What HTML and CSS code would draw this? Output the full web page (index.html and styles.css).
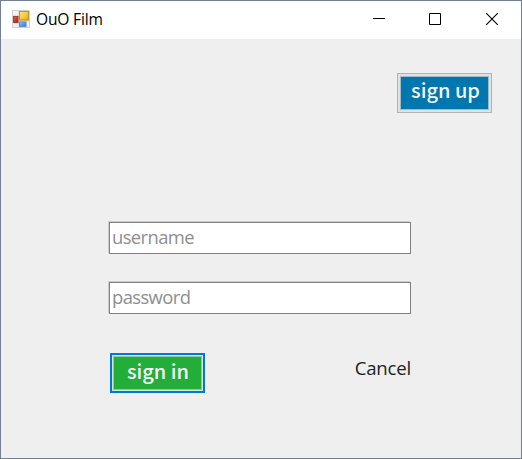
FILE: index.html
```html
<!DOCTYPE html>
<html lang="en">
<head>
<meta charset="utf-8">
<title>OuO Film</title>
<link rel="stylesheet" href="styles.css">
</head>
<body>
<div class="window">
  <header class="titlebar">
    <svg class="app-icon" width="18" height="18" viewBox="0 0 18 18">
      <defs>
        <linearGradient id="y" x1="0" y1="0" x2="1" y2="1"><stop offset="0" stop-color="#ffe98c"/><stop offset="1" stop-color="#eda900"/></linearGradient>
        <linearGradient id="b" x1="0" y1="0" x2="1" y2="1"><stop offset="0" stop-color="#8fc0ff"/><stop offset="1" stop-color="#2f72dc"/></linearGradient>
        <linearGradient id="r" x1="0" y1="0" x2="1" y2="1"><stop offset="0" stop-color="#e46a5c"/><stop offset="1" stop-color="#a5140c"/></linearGradient>
      </defs>
      <rect width="18" height="18" rx="1" fill="#cfcfcf"/>
      <rect x="1" y="1" width="5.5" height="4.5" fill="#f2f2f2"/>
      <rect x="1" y="13.500" width="5.500" height="3.500" fill="#f2f2f2"/>
      <rect x="14.500" y="11.500" width="2.500" height="5.500" fill="#f2f2f2"/>
      <rect x="7.500" y="1.500" width="9" height="8.500" fill="url(#y)" stroke="#c39128"/>
      <rect x="1.500" y="6.500" width="4.500" height="6" fill="url(#r)" stroke="#a83c36"/>
      <rect x="7.500" y="12" width="6.500" height="4.500" fill="url(#b)" stroke="#5b8fd6"/>
    </svg>
    <span class="title">OuO Film</span>
    <svg class="controls" width="126" height="14" viewBox="0 0 126 14" fill="none" stroke="#000">
      <path d="M0 6.500H12M56.500 1.500h11v11h-11z"/>
      <path d="M113.200 1.200l11.600 11.600M124.800 1.200L113.200 12.800" stroke-width="1.100"/>
    </svg>
  </header>
  <main class="content">
    <button class="btn signup"><span>sign up</span></button>
    <form class="login">
      <input class="field" type="text" placeholder="username">
      <input class="field" type="text" placeholder="password">
      <div class="actions">
        <button class="btn signin" type="button"><span>sign in</span></button>
        <span class="cancel">Cancel</span>
      </div>
    </form>
  </main>
</div>
</body>
</html>
```
FILE: styles.css
```css
* { box-sizing: border-box; }
body { margin: 0; font-family: "Noto Sans", "Open Sans", sans-serif; }
.window {
  width: 522px;
  height: 459px;
  border: 1px solid #727f96;
  background: #efefef;
  overflow: hidden;
}
.titlebar {
  display: flex;
  align-items: center;
  height: 38px;
  padding: 0 22px 2px 11px;
  background: #fff;
}
.app-icon { flex: none; }
.title {
  margin: 0 0 0 6px;
  font: 15.600px/20px "Open Sans", sans-serif;
  letter-spacing: -.2px;
  color: #000;
}
.controls { margin-left: auto; }
.content {
  display: flex;
  flex-direction: column;
  padding: 34px 29px 0 108px;
}
.btn {
  width: 95px;
  height: 40px;
  padding: 0;
  font: 500 20px/26px "Noto Sans CJK TC", sans-serif;
  color: #f4f8fb;
}
.btn span { display: block; height: 100%; }
.signup {
  align-self: flex-end;
  padding: 2px;
  border: 1px solid #b3b3b3;
  background: #e1e1e1;
}
.signup span { padding-left: 2px; background: #0077ae; border: 1px solid #9dbdcc; }
.login { width: 302px; margin-top: 109px; }
.field {
  display: block;
  width: 302px;
  height: 32px;
  margin-bottom: 28px;
  padding: 0 2px 4px;
  border: 1px solid #808080;
  border-radius: 0;
  background: #fff;
  box-shadow: -1px -1px 0 #cdcdcd;
  font: 400 18.400px/26px "Open Sans", "Noto Sans", sans-serif;
  letter-spacing: -.600px;
  outline: none;
}
.field::placeholder { color: #8e8e8e; opacity: 1; }
.actions {
  display: flex;
  justify-content: space-between;
  padding: 11px 0 0 1px;
}
.signin {
  border: 2px solid #0078d7;
  padding: 1px;
  background: #d5e5d8;
}
.signin span { padding-left: 1px; line-height: 30px; background: #23ad39; border: 1px solid #8fc9a0; line-height: 28px; }
.cancel {
  margin-top: 1px;
  font: 400 18.600px/28px "Open Sans", "Noto Sans", sans-serif;
  letter-spacing: -.200px;
  color: #222;
}
```
